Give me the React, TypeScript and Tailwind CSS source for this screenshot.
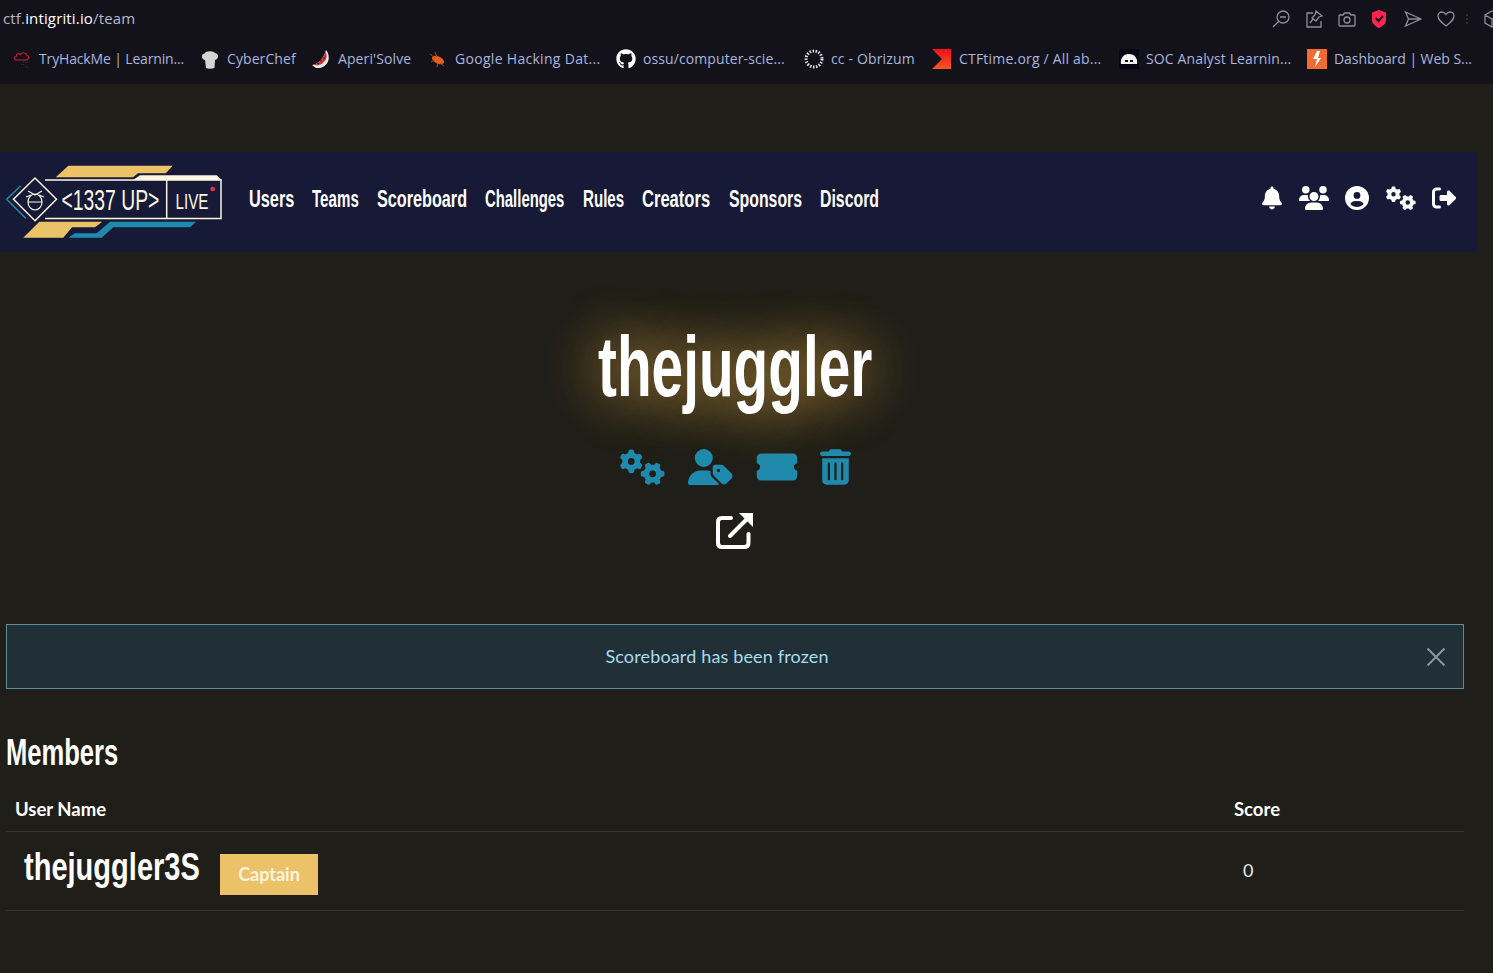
import React from "react"
import {
  FaBell,
  FaCircleUser,
  FaGears,
  FaGithub,
  FaRightFromBracket,
  FaTicketSimple,
  FaTrashCan,
  FaUsers,
  FaUserTag,
} from "react-icons/fa6"

const TryHackIcon = () => (
  <svg width="20" height="20" viewBox="0 0 20 20" fill="none">
    <path d="M4 11 H14 C17 11 17.5 7 15 6.500 C14 3 9.500 3 8.500 5.500 C6 3.500 4 5.500 4.500 7 C1.500 7.500 1.500 11 4 11 Z" stroke="#c8202a" strokeWidth="1.1" />
    <path d="M11 13h5M9 15.500h3M13 18h4" stroke="#7a1820" strokeWidth="1" strokeDasharray="1 1" />
  </svg>
)

const ChefIcon = () => (
  <svg width="20" height="20" viewBox="0 0 20 20">
    <path d="M5 11 C1 10 1 5 4.500 4.500 C6 1.500 13 1.500 15 4 C19 4.500 19 10 15 11 L14.500 19 C12 20 8 20 6 19 Z" fill="#d4d4d2" />
  </svg>
)

const MelonIcon = () => (
  <svg width="20" height="20" viewBox="0 0 20 20">
    <path d="M1 16 C8 15 13 9 15 1 C21 8 17 20 5 19 Z" fill="#e9e9e9" />
    <path d="M2 15.500 C8 14.500 12.500 9 14.700 3 C17.500 8 14 15.500 6 16.500 Z" fill="#d5303a" />
    <circle cx="10" cy="12" r=".8" fill="#222" />
    <circle cx="13" cy="9" r=".8" fill="#222" />
    <circle cx="7" cy="14.500" r=".8" fill="#222" />
  </svg>
)

const BugIcon = () => (
  <svg width="20" height="20" viewBox="0 0 20 20">
    <ellipse cx="10" cy="11" rx="6.500" ry="3.500" fill="#e2611c" transform="rotate(25 10 11)" />
    <path d="M2 5l5 4M7 3l2 5M3 13l4-2M16 17l-4-3M9 18l1-4" stroke="#a84a18" strokeWidth="1" />
  </svg>
)

const GithubIcon = () => <FaGithub className="size-5 text-white" />

const RingIcon = () => (
  <svg width="20" height="20" viewBox="0 0 20 20" fill="none">
    <circle cx="10" cy="10" r="8" stroke="#e4e4e4" strokeWidth="3" strokeDasharray="1.500 1.500" />
  </svg>
)

const CtfIcon = () => (
  <svg width="20" height="20" viewBox="0 0 20 20">
    <defs>
      <linearGradient id="ctf" x1="0" y1="0" x2="0" y2="1">
        <stop offset="0" stopColor="#f00e1e" />
        <stop offset="1" stopColor="#f4561e" />
      </linearGradient>
    </defs>
    <path d="M0 0 H19 V20 H0 L10 10 Z" fill="url(#ctf)" />
  </svg>
)

const SocIcon = () => (
  <svg width="20" height="20" viewBox="0 0 20 20">
    <rect width="20" height="20" fill="#060616" />
    <path d="M2 15 C1 10 4 5 10 5 C16 5 19 10 18 15 Z" fill="#f2f2f2" />
    <path d="M6 11h3v2H6zM11 11h3v2h-3z" fill="#141428" />
  </svg>
)

const BoltIcon = () => (
  <svg width="20" height="20" viewBox="0 0 20 20">
    <rect width="20" height="20" fill="#f26b30" />
    <path d="M10 2 L6 10 H10 L8 18 L14 9 H11 L13 2 Z" fill="#fff" />
  </svg>
)

const bookmarks = [
  { icon: <TryHackIcon />, label: "TryHackMe | Learnin...", w: "w-[161px] tracking-[-0.15px]" },
  { icon: <ChefIcon />, label: "CyberChef", w: "w-[84px] tracking-[0.08px]" },
  { icon: <MelonIcon />, label: "Aperi'Solve", w: "w-[90px] tracking-[0.1px]" },
  { icon: <BugIcon />, label: "Google Hacking Dat...", w: "w-[161px] tracking-[0.3px]" },
  { icon: <GithubIcon />, label: "ossu/computer-scie...", w: "w-[161px] tracking-[0.1px]" },
  { icon: <RingIcon />, label: "cc - Obrizum", w: "w-[101px] tracking-[0.15px]" },
  { icon: <CtfIcon />, label: "CTFtime.org / All ab...", w: "w-[160px] tracking-[0.2px]" },
  { icon: <SocIcon />, label: "SOC Analyst Learnin...", w: "w-[161px] tracking-[0.13px]" },
  { icon: <BoltIcon />, label: "Dashboard | Web S...", w: "w-[140px] tracking-[-0.05px]" },
]

const navLinks = [
  { label: "Users", w: "w-[45px]", s: "scale-x-[0.68]" },
  { label: "Teams", w: "w-[47px]", s: "scale-x-[0.63]" },
  { label: "Scoreboard", w: "w-[90px]", s: "scale-x-[0.675]" },
  { label: "Challenges", w: "w-[80px]", s: "scale-x-[0.62]" },
  { label: "Rules", w: "w-[41px]", s: "scale-x-[0.63]" },
  { label: "Creators", w: "w-[69px]", s: "scale-x-[0.69]" },
  { label: "Sponsors", w: "w-[73px]", s: "scale-x-[0.66]" },
  { label: "Discord", w: "w-[59px]", s: "scale-x-[0.66]" },
]

const display = "font-['Liberation_Sans',sans-serif] font-bold"

const Squeezed: React.FC<{ text: string; w: string; s: string; className?: string }> = ({ text, w, s, className }) => (
  <span className={`inline-block whitespace-nowrap ${w} ${className ?? ""}`}>
    <span className={`inline-block origin-left ${s}`}>{text}</span>
  </span>
)

const BrowserBar = () => (
  <div className="h-[84px] overflow-hidden bg-[#13121b] font-['Open_Sans',sans-serif]">
    <div className="flex h-[37px] items-center justify-between">
      <div className="pl-[3px] text-[15px] tracking-[0.15px] text-[#b9b7c4]">
        ctf.<span className="text-white">intigriti.io</span>/team
      </div>
      <div className="flex w-[221px] shrink-0 items-center gap-[15px] text-[#8f8d9b] [&>*]:shrink-0">
        <svg width="18" height="18" viewBox="0 0 18 18" fill="none" stroke="currentColor" strokeWidth="1.300">
          <circle cx="11" cy="7" r="6" />
          <path d="M8 7h6M6.500 11.500L1 17" />
        </svg>
        <svg width="18" height="18" viewBox="0 0 18 18" fill="none" stroke="currentColor" strokeWidth="1.300">
          <path d="M8 3H2v14h14v-6" />
          <path d="M11 1l6 5-3 1-3 4-4-3 3-3zM8 9l-3 4" />
        </svg>
        <svg width="18" height="18" viewBox="0 0 18 18" fill="none" stroke="currentColor" strokeWidth="1.300">
          <path d="M2 5h3l1.500-2h5L13 5h3a1 1 0 0 1 1 1v9a1 1 0 0 1-1 1H2a1 1 0 0 1-1-1V6a1 1 0 0 1 1-1z" />
          <circle cx="9" cy="10" r="3" />
        </svg>
        <svg width="16" height="18" viewBox="0 0 16 18">
          <path d="M8 0 L15 2.500 V10 C15 14 11 16.500 8 18 C5 16.500 1 14 1 10 V2.500 Z" fill="#ff2450" />
          <path d="M4.500 8 L7.500 11 L12 6" fill="none" stroke="#13121b" strokeWidth="2" />
        </svg>
        <svg className="ml-[2px]" width="18" height="18" viewBox="0 0 18 18" fill="none" stroke="currentColor" strokeWidth="1.300">
          <path d="M1.500 2 L17 9 L1.500 16 L4.500 9 Z M4.500 9H17" />
        </svg>
        <svg width="18" height="18" viewBox="0 0 18 18" fill="none" stroke="currentColor" strokeWidth="1.300">
          <path d="M9 16 C4 12 1 9.500 1 6 C1 3.500 3 2 5 2 C6.800 2 8 3 9 4.500 C10 3 11.200 2 13 2 C15 2 17 3.500 17 6 C17 9.500 14 12 9 16 Z" />
        </svg>
        <div className="-ml-[4px] flex w-[2px] flex-col gap-[2px]">
          <div className="size-[2px] bg-[#2e2d38]" />
          <div className="size-[2px] bg-[#2e2d38]" />
          <div className="size-[2px] bg-[#2e2d38]" />
        </div>
        <svg width="18" height="18" viewBox="0 0 18 18" fill="none" stroke="currentColor" strokeWidth="1.300">
          <path d="M9 1l7 4v8l-7 4-7-4V5zM2 5l7 4 7-4M9 9v8" />
        </svg>
      </div>
    </div>
    <div className="flex items-center pl-[12px] pt-[11px]">
      {bookmarks.map((b) => (
        <div key={b.label} className="flex shrink-0 items-center gap-[7px]">
          <span className="flex size-5 items-center justify-center">{b.icon}</span>
          <span className={`${b.w} whitespace-nowrap text-[14px] text-[#a9b5dd]`}>{b.label}</span>
        </div>
      ))}
    </div>
  </div>
)

const Logo = () => (
  <svg className="shrink-0" width="225" height="100" viewBox="0 2 225 100" fill="none">
    <path d="M55.700 27.300 L68.300 15.700 H172.700 L165.700 23.300 H138 L133 27.300 Z" fill="#ebc267" />
    <path d="M133 30 L140 25.300 H216.700 L221.700 30 Z" fill="#fdf6e3" />
    <path d="M45 30 H221 V68.500 H45" stroke="#fdf6e3" strokeWidth="1.500" />
    <path d="M166.700 30 V68.500" stroke="#fdf6e3" strokeWidth="1.500" />
    <path d="M35 28 L56.500 49.300 L35 70.800 L13.500 49.300 Z" stroke="#fdf6e3" strokeWidth="1.500" />
    <path d="M20.700 35.700 L6.700 49.300 L26 68.500" stroke="#1f8aad" strokeWidth="1.500" />
    <ellipse cx="35" cy="52" rx="7" ry="8" stroke="#fdf6e3" strokeWidth="1.200" />
    <path d="M28 41 L35 45 L42 41 M26 47 L31 45 M44 47 L39 45 M28 52 H42" stroke="#fdf6e3" strokeWidth="1.200" />
    <text transform="translate(61.500 60) scale(.645 1)" fontFamily="Liberation Sans" fontSize="30" fill="#fdf6e3">
      {"<1337 UP>"}
    </text>
    <text transform="translate(175.500 58.500) scale(.69 1)" fontFamily="Liberation Sans" fontSize="22" fill="#fdf6e3">
      LIVE
    </text>
    <circle cx="212.700" cy="39" r="2.300" fill="#ff2450" />
    <path d="M23.300 87.700 L39.300 71.700 H102.300 L95 77.300 H72 L63.300 87.700 Z" fill="#ebc267" />
    <path d="M68.300 87.700 L75 83.300 H96.700 L110 71.700 H196 L190 77.300 H113.300 L101.700 87.700 Z" fill="#1f8aad" />
  </svg>
)

const Navbar = () => (
  <nav className="flex h-[100px] w-[1477px] items-center bg-[#161a36] text-white">
    <Logo />
    <div className="ml-[24px] flex gap-[18px] pb-[6px] text-[24px] leading-none">
      {navLinks.map((l) => (
        <Squeezed key={l.label} text={l.label} w={l.w} s={l.s} className={display} />
      ))}
    </div>
    <div className="ml-auto flex items-center pb-[8px] pr-[21px]">
      <FaBell className="h-[24px] w-[20px]" />
      <FaUsers className="ml-[17px] h-[24px] w-[30px]" />
      <FaCircleUser className="ml-[16px] size-[24px]" />
      <FaGears className="ml-[17px] h-[24px] w-[30px]" />
      <FaRightFromBracket className="ml-[16px] size-[24px]" />
    </div>
  </nav>
)

const TeamHeader = () => (
  <div className="flex flex-col items-center">
    <h1 className="mt-[58px] flex h-[112px] w-[274px] items-center justify-start whitespace-nowrap font-['Liberation_Sans',sans-serif] text-[86px] font-bold leading-none text-white [text-shadow:0_0_70px_#eab04a]">
      <span className="inline-block origin-left scale-x-[0.66]">thejuggler</span>
    </h1>
    <div className="mt-[25px] flex items-center gap-[23px] text-[#1f8aad]">
      <FaGears className="h-[36px] w-[45px]" />
      <FaUserTag className="h-[36px] w-[45px]" />
      <FaTicketSimple className="h-[36px] w-[42px]" />
      <FaTrashCan className="-ml-[1px] h-[40px] w-[31px]" />
    </div>
    <svg className="mt-[25px]" width="38" height="38" viewBox="0 0 38 38" fill="none" stroke="#fff" strokeWidth="4" strokeLinecap="round">
      <path d="M15 6 H6 C3.500 6 2 7.500 2 10 V31 C2 33.500 3.500 35 6 35 H28 C31 35 32.500 33.500 32.500 31 V22" />
      <path d="M14 24 L32 6" />
      <path d="M23 1 H37 V15 Z" fill="#fff" stroke="none" />
    </svg>
  </div>
)

const Alert = () => (
  <div className="relative mt-[74px] flex h-[65px] items-center justify-center border border-[#5d8c9c] bg-[#212f36] pr-[36px] font-['Lato',sans-serif] text-[18px] tracking-[0.15px] text-[#a6dbee]">
    Scoreboard has been frozen
    <svg className="absolute right-[17px] top-[22px]" width="20" height="20" viewBox="0 0 20 20" stroke="#8d9ca3" strokeWidth="1.800">
      <path d="M1.500 1.500L18.500 18.500M18.500 1.500L1.500 18.500" />
    </svg>
  </div>
)

const Members = () => (
  <section className="mt-[45px] font-['Lato',sans-serif] text-white">
    <h2 className="h-[38px] w-[112px] whitespace-nowrap font-['Liberation_Sans',sans-serif] text-[36px] font-bold leading-[38px]">
      <span className="inline-block origin-left scale-x-[0.71]">Members</span>
    </h2>
    <div className="mt-[26px] flex h-[34px] items-center border-b border-[#3b3421] pb-[9px] pl-[9px] text-[18.500px] font-bold">
      <div className="w-[1219px]">User Name</div>
      <div>Score</div>
    </div>
    <div className="flex h-[79px] items-center border-b border-[#3b3421] pl-[18px]">
      <div className="flex w-[1219px] items-center">
        <span className="-mt-[8px] inline-block h-[42px] w-[175px] whitespace-nowrap font-['Liberation_Sans',sans-serif] text-[38px] font-bold leading-[42px]">
          <span className="inline-block origin-left scale-x-[0.764]">thejuggler3S</span>
        </span>
        <span className="ml-[21px] mt-[6px] flex h-[41px] w-[98px] items-center justify-center bg-[#ebc267] text-[18px] font-bold text-[#fdf3dc]">
          Captain
        </span>
      </div>
      <div className="-mt-[2px] text-[18px] text-[#e8e8e8]">0</div>
    </div>
  </section>
)

export default function App() {
  return (
    <div className="h-[973px] w-[1493px] overflow-hidden bg-[#1f1e18]">
      <BrowserBar />
      <div className="h-[68px]" />
      <Navbar />
      <div className="w-[1464px] pl-[6px]">
        <TeamHeader />
        <Alert />
        <Members />
      </div>
    </div>
  )
}
